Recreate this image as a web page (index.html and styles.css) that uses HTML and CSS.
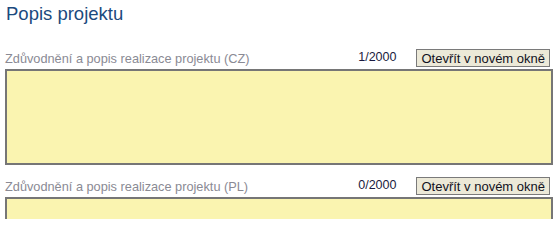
FILE: index.html
```html
<!DOCTYPE html>
<html lang="cs">
<head>
<meta charset="utf-8">
<title>Popis projektu</title>
<link rel="stylesheet" href="styles.css">
</head>
<body>
<div class="page">
  <h2 class="title">Popis projektu</h2>
  <div class="field">
    <div class="field-head">
      <label class="field-label">Zdůvodnění a popis realizace projektu (CZ)</label>
      <div class="field-tools">
        <span class="counter">1/2000</span>
        <button class="open-btn" type="button">Otevřít v novém okně</button>
      </div>
    </div>
    <textarea class="field-input"></textarea>
  </div>
  <div class="field">
    <div class="field-head">
      <label class="field-label">Zdůvodnění a popis realizace projektu (PL)</label>
      <div class="field-tools">
        <span class="counter">0/2000</span>
        <button class="open-btn" type="button">Otevřít v novém okně</button>
      </div>
    </div>
    <textarea class="field-input"></textarea>
  </div>
</div>
</body>
</html>
```
FILE: styles.css
```css
html, body {
  margin: 0;
  padding: 0;
  background: #ffffff;
}
body {
  font-family: "Liberation Sans", Arial, sans-serif;
  font-size: 13px;
}
.page {
  height: 219px;
  overflow: hidden;
  padding: 0 4px 0 5px;
}
.title {
  margin: 0;
  padding: 3px 0 0 1px;
  height: 48px;
  box-sizing: border-box;
  font-size: 18.5px;
  font-weight: normal;
  color: #1b4a7e;
  line-height: 22px;
}
.field {
  display: flex;
  flex-direction: column;
  margin-bottom: 11px;
}
.field-head {
  display: flex;
  justify-content: space-between;
  align-items: flex-end;
  height: 21px;
  padding-bottom: 2px;
  box-sizing: border-box;
}
.field-label {
  color: #8a8a94;
  font-size: 12.75px;
  line-height: 15px;
  padding-bottom: 1px;
}
.field-tools {
  display: flex;
  align-items: flex-end;
  gap: 20px;
  padding-right: 3px;
}
.counter {
  color: #1a1a40;
  font-size: 12.5px;
  line-height: 15px;
  padding-bottom: 2px;
}
.open-btn {
  margin: 0;
  height: 18px;
  padding: 0 4px;
  font-family: "Liberation Sans", Arial, sans-serif;
  font-size: 13px;
  line-height: 15px;
  color: #111122;
  background: #ece9d8;
  border: 1px solid #7a7a7a;
  border-radius: 0;
}
.field-input {
  display: block;
  box-sizing: border-box;
  width: 100%;
  height: 96px;
  margin: 0;
  padding: 2px;
  background: #faf4b0;
  border: 2px solid #767676;
  border-radius: 0;
  resize: none;
  font-family: "Liberation Sans", Arial, sans-serif;
  font-size: 13px;
}
```
